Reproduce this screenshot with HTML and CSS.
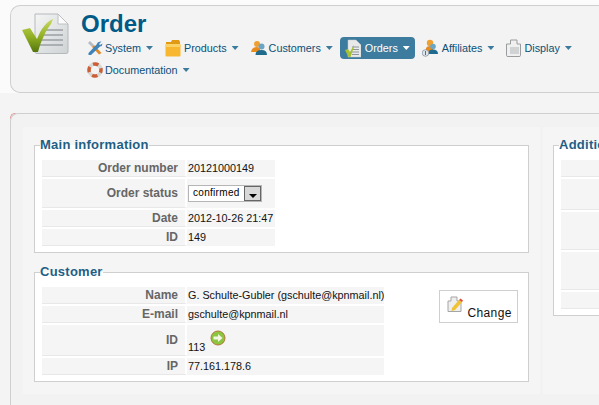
FILE: index.html
```html
<!DOCTYPE html>
<html lang="en">
<head>
<meta charset="utf-8">
<title>Order</title>
<link rel="stylesheet" href="styles.css">
</head>
<body>
<header class="toolbar">
  <svg class="page-icon" width="48" height="48" viewBox="0 0 48 48">
    <defs>
      <linearGradient id="sheet" x1="0" y1="0" x2="1" y2="1"><stop offset="0" stop-color="#f4f5f5"/><stop offset="1" stop-color="#cfd3d4"/></linearGradient>
      <linearGradient id="tick" x1="0" y1="0" x2="0" y2="1"><stop offset="0" stop-color="#c9d962"/><stop offset="0.55" stop-color="#8fae22"/><stop offset="1" stop-color="#55760e"/></linearGradient>
    </defs>
    <path d="M13 1H36L46 11V39Q46 40.500 44 40.500H15Q13 40.500 13 39Z" fill="url(#sheet)" stroke="#b4b9bb"/>
    <path d="M36 1V11H46Z" fill="#fbfbfb" stroke="#bcc0c2"/>
    <path d="M22 17H41M21 22H41M19 27H41M17 32H41" stroke="#9aa0a3" stroke-width="1.500"/>
    <path d="M0 17L8 15L15 26C19 16 24 9 31 6L29 11C24 17 19 28 16 39L11 39Z" fill="url(#tick)"/>
  </svg>
  <div class="toolbar-main">
    <h1 class="title">Order</h1>
    <nav class="menu">
      <a class="menu-item">
        <svg class="menu-icon" width="16" height="16" viewBox="0 0 16 16"><path d="M3 1L7 5L5 7L1 3Z" fill="#b5bcc2"/><path d="M5 7L12 14.500L14.500 13L7 5Z" fill="#e08a2c"/><path d="M14.500 1.500L12 4L13 5L15.500 3.500Q15.500 6 13 6.500L4 15H1.500V13L10 4Q10 1.500 14.500 1.500Z" fill="#3f83b8"/></svg>
        <span>System</span><i class="caret"></i>
      </a>
      <a class="menu-item">
        <svg class="menu-icon icon-gap3" width="16" height="18" viewBox="0 0 16 18"><path d="M1 3H6L7 1H14L15 3V6H1Z" fill="#e09a14"/><rect x="0.500" y="5" width="15" height="12.500" rx="1" fill="#f7b731"/><rect x="0.500" y="5" width="15" height="3" fill="#fbd266"/></svg>
        <span>Products</span><i class="caret"></i>
      </a>
      <a class="menu-item">
        <svg class="menu-icon" width="16" height="16" viewBox="0 0 16 16"><circle cx="6" cy="4" r="3" fill="#f0a030"/><path d="M0 12Q1 7 6 7Q8 7 9 9V12Z" fill="#e88a1c"/><circle cx="10.500" cy="6.500" r="3" fill="#6aa5c4"/><path d="M4.500 15Q4.500 10 10.500 10Q16 10 16 15Z" fill="#1f6b8e"/></svg>
        <span>Customers</span><i class="caret"></i>
      </a>
      <a class="menu-item is-active">
        <svg class="menu-icon icon-gap4" width="16" height="19" viewBox="0 0 16 19"><path d="M3 1H11L16 6V18H3Z" fill="#e8eaea" stroke="#c4c8ca" stroke-width="0.500"/><path d="M7 8H14M7 10.500H14M7 13H14M7 15.500H14" stroke="#8f9699"/><path d="M0 11L3 10L5 13L9 6L9 8L5.500 18H3.500Z" fill="#a5c034"/></svg>
        <span>Orders</span><i class="caret"></i>
      </a>
      <a class="menu-item">
        <svg class="menu-icon icon-gap4" width="16" height="18" viewBox="0 0 16 18"><circle cx="8" cy="4" r="3.200" fill="#f0a030"/><path d="M4 13V9Q5 7 8 7Q10 7 11 9V13Z" fill="#e88a1c"/><circle cx="11" cy="7.500" r="2.800" fill="#6aa5c4"/><path d="M6 15Q6 10.500 11 10.500Q16 10.500 16 15Z" fill="#1f6b8e"/><circle cx="3.500" cy="14" r="3.300" fill="#dfe5ea" stroke="#7b8b99" stroke-width="0.700"/><path d="M3.500 12V16" stroke="#52708a"/></svg>
        <span>Affiliates</span><i class="caret"></i>
      </a>
      <a class="menu-item">
        <svg class="menu-icon icon-gap3" width="15" height="18" viewBox="0 0 15 18"><path d="M4.500 1H11V5H14.500V16.500Q14.500 17.500 13 17.500H2Q0.500 17.500 0.500 16.500V5H4.500Z" fill="#f0f0f0" stroke="#9a9c9d"/><rect x="4" y="8" width="9" height="7" fill="#d0d2d3"/></svg>
        <span>Display</span><i class="caret"></i>
      </a>
      <a class="menu-item">
        <svg class="menu-icon" width="16" height="16" viewBox="0 0 16 16"><circle cx="8" cy="8" r="6" fill="none" stroke="#d7d7d5" stroke-width="3.500"/><circle cx="8" cy="8" r="6" fill="none" stroke="#cc5f35" stroke-width="3.500" stroke-dasharray="5.500 3.925" stroke-dashoffset="2.750"/></svg>
        <span>Documentation</span><i class="caret"></i>
      </a>
    </nav>
  </div>
</header>

<main class="panel">
  <div class="columns">
    <div class="col col-left">
      <fieldset class="box">
        <legend>Main information</legend>
        <table class="info">
          <tr><th>Order number</th><td>20121000149</td></tr>
          <tr class="tall"><th>Order status</th><td>
            <span class="select"><span class="select-value">confirmed</span><span class="select-btn"><i></i></span></span>
          </td></tr>
          <tr><th>Date</th><td>2012-10-26 21:47</td></tr>
          <tr><th>ID</th><td>149</td></tr>
        </table>
      </fieldset>
      <fieldset class="box box-customer">
        <legend>Customer</legend>
        <div class="customer-row">
          <table class="info info-customer">
            <tr><th>Name</th><td>G. Schulte-Gubler (gschulte@kpnmail.nl)</td></tr>
            <tr><th>E-mail</th><td>gschulte@kpnmail.nl</td></tr>
            <tr class="tall"><th>ID</th><td class="id-cell">113<svg class="go-icon" width="16" height="16" viewBox="0 0 16 16"><circle cx="8" cy="8" r="7" fill="#8cc63e" stroke="#b5763a"/><path d="M3.500 6.500H8V4L12.500 8L8 12V9.500H3.500Z" fill="#f2f8e4"/></svg></td></tr>
            <tr><th>IP</th><td>77.161.178.6</td></tr>
          </table>
          <a class="change">
            <svg width="16" height="17" viewBox="0 0 16 17"><path d="M4 1H10V5H14V15.500H1V5H4Z" fill="#eeeeee" stroke="#a5a5a5"/><path d="M5 12L12 4L15 6L8 14L4.500 15Z" fill="#f1c232"/><path d="M12 4L13.500 2.500L16 4.500L15 6Z" fill="#e0503c"/></svg>
            <span>Change</span>
          </a>
        </div>
      </fieldset>
    </div>
    <div class="col col-right">
      <fieldset class="box box-extra">
        <legend>Additional information</legend>
        <table class="info info-extra">
          <tr class="h1"><th></th><td></td></tr>
          <tr class="h2"><th></th><td></td></tr>
          <tr class="h3"><th></th><td></td></tr>
          <tr class="h3"><th></th><td></td></tr>
          <tr class="h1"><th></th><td></td></tr>
        </table>
      </fieldset>
    </div>
  </div>
</main>
</body>
</html>
```
FILE: styles.css
```css
html, body {
  margin: 0;
  padding: 0;
  height: 405px;
  overflow: hidden;
}
body {
  background: linear-gradient(#fbfbfb 0, #fbfbfb 93px, #f4f4f4 93px);
  font-family: "Liberation Sans", Arial, sans-serif;
  font-size: 11px;
  color: #111;
  padding-top: 5px;
  box-sizing: border-box;
}
.toolbar {
  display: flex;
  margin-left: 10px;
  height: 88px;
  box-sizing: border-box;
  background: #f3f3f3;
  border: 1px solid #cfcfcf;
  border-right: 0;
  border-radius: 10px 0 0 10px;
  padding: 7px 0 0 11px;
}
.page-icon { flex: none; }
.toolbar-main {
  flex: 1;
  min-width: 0;
}
.title {
  margin: 0 0 0 11px;
  font-size: 24px;
  line-height: 22px;
  height: 24px;
  font-weight: bold;
  color: #005a87;
}
.menu {
  display: flex;
  flex-wrap: wrap;
  gap: 0 2px;
  margin-left: 12px;
  width: 505px;
  font-size: 10.800px;
}
.menu-item {
  display: flex;
  align-items: center;
  height: 22px;
  padding: 0 5px;
  color: #0a5078;
  border-radius: 4px;
}
.menu-icon { flex: none; margin-right: 2px; }
.icon-gap3 { margin-right: 3px; }
.icon-gap4 { margin-right: 4px; }
.caret {
  width: 7px;
  height: 4px;
  margin-left: 5px;
  background: #3d7a9c;
  clip-path: polygon(0 0, 100% 0, 50% 100%);
}
.is-active {
  background: #3d7c9e;
  color: #fff;
}
.is-active .caret { background: #fff; }

.panel {
  position: relative;
  margin: 20px 0 0 10px;
  height: 292px;
  box-sizing: border-box;
  background: #f2f2f2;
  border: 1px solid #cfcfcf;
  border-width: 1px 0 0 1px;
  border-radius: 8px 0 0 0;
  padding: 13px 0 0 12px;
}
.panel::before {
  content: "";
  position: absolute;
  top: -1px;
  left: -1px;
  width: 4px;
  height: 4px;
  border: 1px solid transparent;
  border-top-color: #e0a0a0;
  border-left-color: #e0a0a0;
  border-radius: 5px 0 0 0;
}
.columns {
  display: flex;
  gap: 3px;
  height: 267px;
  width: 640px;
}
.col {
  background: #f5f5f5;
  flex: none;
  box-sizing: border-box;
  padding-top: 10px;
}
.col-left { width: 517px; padding-left: 11px; }
.col-right { width: 120px; padding-left: 10px; }

.box {
  margin: 0;
  padding: 7px 0 4px 7px;
  border: 1px solid #cfcfcf;
  background: #fff;
  box-sizing: border-box;
  min-width: 0;
}
.col-left .box { width: 495px; }
.box legend {
  margin-left: -2px;
  padding: 0;
  font-size: 13px;
  letter-spacing: 0.250px;
  line-height: 16px;
  font-weight: bold;
  color: #1f5f85;
  white-space: nowrap;
}
.box-customer { margin-top: 11px; }
.box-extra { width: 200px; }

.info { border-collapse: separate; border-spacing: 0 2px; margin-top: -2px; }
.info th, .info td {
  background: #f5f5f5;
  border-bottom: 1px solid #e8e8e8;
  height: 16px;
  padding: 0;
  box-sizing: content-box;
  line-height: 16px;
  font-weight: normal;
}
.info th {
  width: 136px;
  padding-right: 7px;
  text-align: right;
  font-size: 12px;
  font-weight: bold;
  color: #666;
  border-right: 2px solid #fff;
}
.info td {
  width: 87px;
  padding-left: 1px;
  font-size: 10.800px;
  white-space: nowrap;
  color: #111;
  border-bottom-color: #f5f5f5;
}
.info .tall th, .info .tall td { height: 28px; }
.info-customer td { width: 196px; }
.info-customer .tall th, .info-customer .tall td { height: 30px; }

.select {
  display: inline-flex;
  align-items: center;
  justify-content: space-between;
  box-sizing: border-box;
  width: 74px;
  height: 17px;
  border: 1px solid #b5b5b5;
  background: #fff;
  vertical-align: middle;
}
.select-value { padding-left: 4px; font-size: 10px; letter-spacing: 0.300px; color: #000; }
.select-btn {
  display: flex;
  align-items: flex-end;
  justify-content: center;
  width: 17px;
  height: 15px;
  box-sizing: border-box;
  background: #d8d8d8;
  border: 1px solid #666;
  padding-bottom: 2px;
}
.select-btn i {
  width: 0; height: 0;
  border: 4px solid transparent;
  border-bottom: 0;
  border-top: 4px solid #000;
}
.info .id-cell { vertical-align: bottom; }
.go-icon { vertical-align: 5px; margin-left: 5px; }

.customer-row { display: flex; align-items: flex-start; }
.change {
  display: flex;
  align-items: flex-start;
  box-sizing: border-box;
  width: 79px;
  height: 33px;
  margin: 3px 0 0 55px;
  border: 1px solid #cfcfcf;
  padding: 5px 0 0 7px;
  font-size: 12px;
  letter-spacing: 0.400px;
  color: #111;
  background: #fff;
}
.change span { margin: 10px 0 0 4px; line-height: 14px; }

.info-extra th { width: 100px; padding: 0; }
.info-extra td { width: 100px; padding: 0; }
.info-extra .h2 th, .info-extra .h2 td { height: 30px; }
.info-extra .h3 th, .info-extra .h3 td { height: 37px; }
```
